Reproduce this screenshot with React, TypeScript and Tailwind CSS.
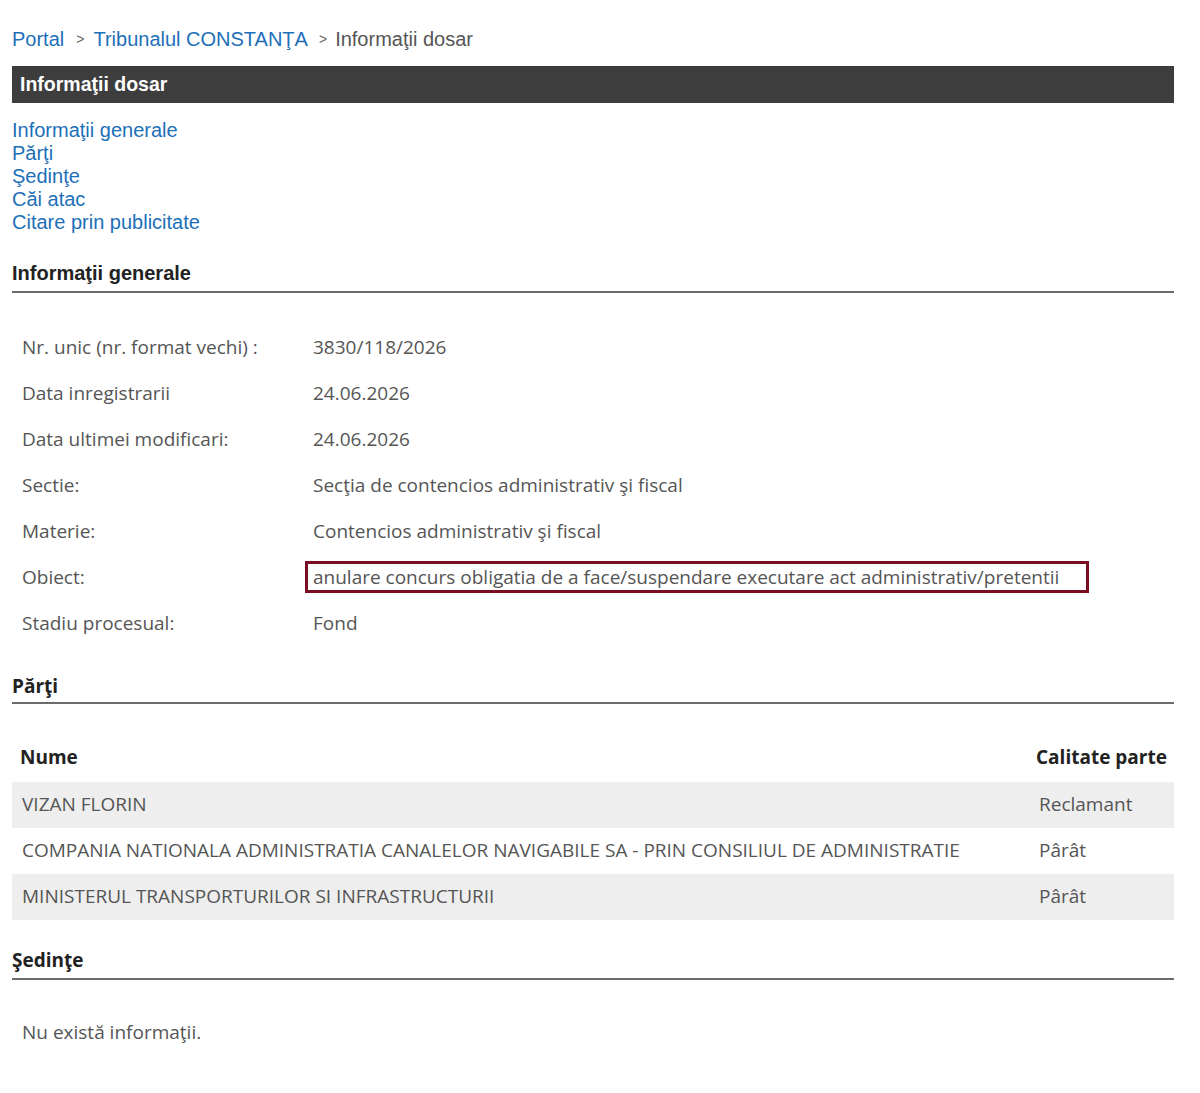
import React from 'react';

const arial = { fontFamily: '"Liberation Sans", Arial, sans-serif' };

const rows: { label: string; value: string; highlight?: boolean }[] = [
    { label: 'Nr. unic (nr. format vechi) :', value: '3830/118/2026' },
    { label: 'Data inregistrarii', value: '24.06.2026' },
    { label: 'Data ultimei modificari:', value: '24.06.2026' },
    { label: 'Sectie:', value: 'Secţia de contencios administrativ şi fiscal' },
    { label: 'Materie:', value: 'Contencios administrativ şi fiscal' },
    { label: 'Obiect:', value: 'anulare concurs obligatia de a face/suspendare executare act administrativ/pretentii', highlight: true },
    { label: 'Stadiu procesual:', value: 'Fond' },
];

const parti = [
    { nume: 'VIZAN FLORIN', calitate: 'Reclamant' },
    { nume: 'COMPANIA NATIONALA ADMINISTRATIA CANALELOR NAVIGABILE SA - PRIN CONSILIUL DE ADMINISTRATIE', calitate: 'Pârât' },
    { nume: 'MINISTERUL TRANSPORTURILOR SI INFRASTRUCTURII', calitate: 'Pârât' },
];

export default function App() {
    return (
        <div className="min-h-[1093px] bg-white">
            <div className="ml-[12px] w-[1162px] pt-[27px] font-['Open_Sans',sans-serif] text-[#555]">
                {/* breadcrumb */}
                <div className="flex items-center text-[20px] leading-[24px]" style={arial}>
                    <a className="text-[#1d6fb8]">Portal</a>
                    <span className="ml-[12px] text-[14px] text-[#666]">&gt;</span>
                    <a className="ml-[9px] text-[#1d6fb8]">Tribunalul CONSTANŢA</a>
                    <span className="ml-[11px] text-[14px] text-[#666]">&gt;</span>
                    <span className="ml-[8px] text-[#555]">Informaţii dosar</span>
                </div>

                <div className="mt-[15px] flex h-[37px] items-center bg-[#3d3d3d] px-[8px]">
                    <span className="text-[19.5px] font-bold text-white" style={arial}>Informaţii dosar</span>
                </div>

                <div className="mt-[16px] flex flex-col text-[20px] leading-[23px] text-[#1d6fb8]" style={arial}>
                    <a>Informaţii generale</a>
                    <a>Părţi</a>
                    <a>Şedinţe</a>
                    <a>Căi atac</a>
                    <a>Citare prin publicitate</a>
                </div>

                {/* Informatii generale */}
                <div className="mt-[24px] border-b-2 border-[#6b6b6b] pb-[3px]">
                    <h2 className="text-[20px] font-bold text-[#222]" style={arial}>Informaţii generale</h2>
                </div>

                <div className="mt-[31px] flex flex-col">
                    {rows.map((r) => (
                        <div key={r.label} className="flex h-[46px] items-center text-[19px]">
                            <div className="w-[301px] pl-[10px]">{r.label}</div>
                            {r.highlight ? (
                                <div className="-ml-[8px] flex h-[32px] w-[784px] items-center border-[3px] border-[#7a0f24] px-[5px]">{r.value}</div>
                            ) : (
                                <div>{r.value}</div>
                            )}
                        </div>
                    ))}
                </div>

                {/* Parti */}
                <div className="mt-[26px] border-b-2 border-[#6b6b6b] pb-[1px]">
                    <h2 className="text-[19px] font-bold text-[#222]">Părţi</h2>
                </div>

                <table className="mt-[30px] w-full table-fixed border-collapse text-[19px]">
                    <colgroup>
                        <col />
                        <col className="w-[138px]" />
                    </colgroup>
                    <thead>
                        <tr className="h-[48px]">
                            <th className="pl-[8px] text-left font-bold text-[#222]">Nume</th>
                            <th className="text-left font-bold text-[#222]">Calitate parte</th>
                        </tr>
                    </thead>
                    <tbody>
                        {parti.map((p, i) => (
                            <tr key={p.nume} className={i % 2 === 0 ? 'h-[46px] bg-[#eeeeee]' : 'h-[46px]'}>
                                <td className="pl-[10px]">{p.nume}</td>
                                <td className="pl-[3px]">{p.calitate}</td>
                            </tr>
                        ))}
                    </tbody>
                </table>

                {/* Sedinte */}
                <div className="mt-[26px] border-b-2 border-[#6b6b6b] pb-[4px]">
                    <h2 className="text-[19px] font-bold text-[#222]">Şedinţe</h2>
                </div>

                <div className="mt-[38px] pl-[10px] text-[19px]">Nu există informaţii.</div>
            </div>
        </div>
    );
}
